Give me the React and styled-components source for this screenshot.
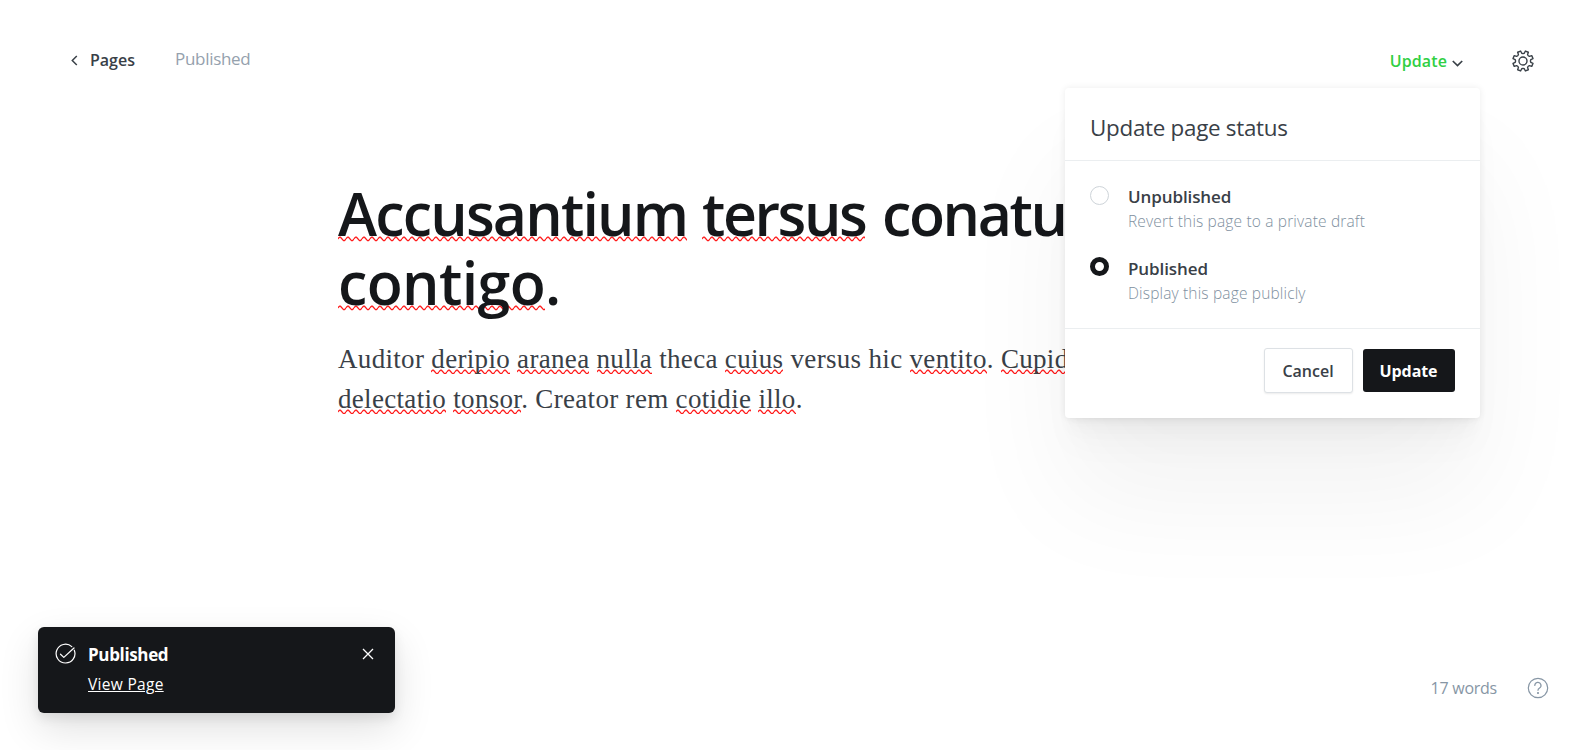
import React from "react";
import styled, { createGlobalStyle, css } from "styled-components";

const Global = createGlobalStyle`
  * { box-sizing: border-box; }
  body { margin: 0; background: #fff; font-family: "Open Sans", "Noto Sans", sans-serif; color: #15171a; overflow: hidden; }
  button { font-family: inherit; }
`;

const Screen = styled.div`
  position: relative;
  display: flex;
  flex-direction: column;
  width: 100%;
  height: 750px;
  overflow: hidden;
`;

const TopBar = styled.header`
  display: flex;
  align-items: center;
  height: 122px;
  padding: 0 49px 0 71px;
`;

const BackLink = styled.a`
  display: flex;
  align-items: center;
  gap: 12px;
  margin-top: -2px;
  color: #394047;
  svg { display: block; }
`;

const Label = styled.span`
  display: block;
  white-space: nowrap;
  line-height: 24px;
  font-size: ${(p) => p.$size || 16}px;
  font-weight: ${(p) => p.$weight || 400};
  letter-spacing: ${(p) => p.$track || 0}px;
  color: ${(p) => p.$color || "#394047"};
`;

const Status = styled.div`
  margin: -4px 0 0 40px;
`;

const Actions = styled.div`
  display: flex;
  align-items: center;
  margin-left: auto;
`;

const PublishTrigger = styled.button`
  display: flex;
  align-items: center;
  gap: 5px;
  padding: 0;
  margin-right: 49px;
  border: 0;
  background: none;
  svg { display: block; margin-top: 4px; }
`;

const IconButton = styled.button`
  display: block;
  padding: 0;
  border: 0;
  background: none;
  svg { display: block; }
`;

const Editor = styled.main`
  width: 910px;
  margin-left: 338px;
  padding-top: 57px;
`;

const Title = styled.h1`
  margin: 0;
  font-size: 59px;
  line-height: 69px;
  font-weight: 600;
  letter-spacing: -0.6px;
  color: #15171a;
  white-space: nowrap;
`;

const Body = styled.p`
  margin: 22px 0 0;
  font-family: "Liberation Serif", serif;
  font-size: 27px;
  line-height: 40px;
  letter-spacing: 0.32px;
  color: #394047;
  white-space: nowrap;
`;

const squiggle =
  "data:image/svg+xml,%3Csvg xmlns='http://www.w3.org/2000/svg' width='8' height='6'%3E%3Cpath d='M-3 4.600L-2 4.600L1.500 1.200L2.500 1.200L5.500 4.600L6.500 4.600L9.500 1.200' fill='none' stroke='%23ff1a1a' stroke-width='1.3' stroke-linejoin='round'/%3E%3C/svg%3E";

const Word = styled.span`
  letter-spacing: ${(p) => (p.$track === undefined ? "inherit" : `${p.$track}px`)};
  background: url("${squiggle}") repeat-x 0 ${(p) => (p.$large ? 63 : 25)}px;
`;

const Tracked = styled.span`
  margin-left: 2px;
  letter-spacing: ${(p) => p.$track}px;
`;

const Menu = styled.section`
  position: absolute;
  top: 88px;
  right: 103px;
  width: 415px;
  height: 330px;
  border-radius: 4px;
  background: #fff;
  box-shadow: 0 0 7px rgba(0, 0, 0, 0.08), 0 5.1px 5.3px -5px rgba(0, 0, 0, 0.016),
    0 9.5px 10px -5px rgba(0, 0, 0, 0.02), 0 17px 17.9px -5px rgba(0, 0, 0, 0.024),
    0 31.8px 33.4px -5px rgba(0, 0, 0, 0.029), 0 80px 115px 0 rgba(0, 0, 0, 0.05);
`;

const MenuHeader = styled.header`
  height: 73px;
  padding: 28px 25px 0;
  border-bottom: 1px solid #ebeef0;
`;

const Options = styled.div`
  height: 168px;
  padding: 24px 25px 0;
  border-bottom: 1px solid #ebeef0;
`;

const Option = styled.div`
  display: flex;
  gap: 19px;
  height: 71px;
`;

const OptionText = styled.div`
  padding-top: ${(p) => (p.$lower ? 1 : 0)}px;
`;

const Radio = styled.span`
  width: 19px;
  height: 19px;
  margin-top: 1px;
  border-radius: 50%;
  border: 1px solid #ced4d9;
  ${(p) => p.$checked && css`border: 5px solid #15171a;`}
`;

const MenuFooter = styled.footer`
  display: flex;
  justify-content: flex-end;
  align-items: center;
  gap: 10px;
  padding: 19px 25px 0;
`;

const Button = styled.button`
  display: flex;
  align-items: center;
  justify-content: center;
  width: ${(p) => (p.$primary ? 92 : 89)}px;
  height: ${(p) => (p.$primary ? 43 : 45)}px;
  padding: 0 1px 0 0;
  border-radius: 3px;
  border: ${(p) => (p.$primary ? "0" : "1px solid #dde1e5")};
  background: ${(p) => (p.$primary ? "#15171a" : "#fff")};
  box-shadow: ${(p) => (p.$primary ? "none" : "0 1px 2px rgba(0,0,0,.08)")};
`;

const Toast = styled.aside`
  position: absolute;
  left: 38px;
  top: 627px;
  display: flex;
  width: 357px;
  height: 86px;
  padding: 16px 21px 0 17px;
  border-radius: 6px;
  background: #15171a;
  box-shadow: 0 0 1px rgba(0, 0, 0, 0.05), 0 5px 12px rgba(0, 0, 0, 0.09), 0 16px 40px rgba(0, 0, 0, 0.12);
  svg { display: block; }
`;

const ToastText = styled.div`
  flex: 1;
  padding-left: 12px;
`;

const ToastLink = styled.a`
  display: block;
  margin-top: 5px;
  font-size: 15.5px;
  letter-spacing: 0.3px;
  line-height: 24px;
  color: #fff;
  text-decoration: underline;
`;

const CloseIcon = styled.svg`
  margin-top: 5px;
`;

const EditorFooter = styled.footer`
  display: flex;
  align-items: center;
  justify-content: flex-end;
  gap: 30px;
  margin-top: auto;
  height: 124px;
  padding-right: 34px;
  svg { display: block; }
`;

/* Eight rounded teeth, generated around the centre of a 24-unit box. */
const gearPath = (() => {
  const points = [];
  for (let i = 0; i < 8; i++) {
    [[-0.2, 11.2], [0.2, 11.2], [0.29, 8.6], [0.5, 8.1], [0.71, 8.6]].forEach(([offset, radius]) => {
      const a = (i + offset + 0.5) * (Math.PI / 4);
      points.push(`${(12 + radius * Math.sin(a)).toFixed(2)} ${(12 - radius * Math.cos(a)).toFixed(2)}`);
    });
  }
  return `M${points.join("L")}Z`;
})();

const GearIcon = () => (
  <svg width="22" height="22" viewBox="0 0 24 24" fill="none" stroke="#394047" strokeWidth="1.5" strokeLinejoin="round">
    <circle cx="12" cy="12" r="4.4" />
    <path d={gearPath} />
  </svg>
);

export default function App() {
  return (
    <Screen>
      <Global />
      <TopBar>
        <BackLink>
          <svg width="7" height="11" viewBox="0 0 7 11" fill="none" stroke="#394047" strokeWidth="1.5">
            <path d="M5.8 1L1.3 5.5l4.5 4.5" />
          </svg>
          <Label $weight={600} $track={0}>Pages</Label>
        </BackLink>
        <Status>
          <Label $size={17} $color="#95a1ad" $track={-0.3}>Published</Label>
        </Status>
        <Actions>
          <PublishTrigger>
            <Label $weight={600} $color="#30cf43" $track={0.1}>Update</Label>
            <svg width="11" height="7" viewBox="0 0 11 7" fill="none" stroke="#394047" strokeWidth="1.7">
              <path d="M.8 1l4.7 4.6L10.2 1" />
            </svg>
          </PublishTrigger>
          <IconButton aria-label="Settings"><GearIcon /></IconButton>
        </Actions>
      </TopBar>

      <Editor>
        <Title>
          <Word $large $track={-1.8}>Accusantium</Word> <Word $large $track={-2.4}>tersus</Word>{" "}
          <Tracked $track={-2.4}>conatus</Tracked><br />
          <Word $large>contigo</Word>.
        </Title>
        <Body>
          Auditor <Word>deripio</Word> <Word>aranea</Word> <Word>nulla</Word> theca <Word>cuius</Word> versus hic{" "}
          <Word>ventito</Word>. <Word>Cupid</Word><br />
          <Word>delectatio</Word> <Word>tonsor</Word>. Creator rem <Word>cotidie</Word> <Word>illo</Word>.
        </Body>
      </Editor>

      <EditorFooter>
        <Label $color="#8796a5" $track={-0.25}>17 words</Label>
        <svg width="22" height="22" viewBox="0 0 22 22" fill="none" stroke="#8796a5" strokeWidth="1.2" strokeLinecap="round">
          <circle cx="11" cy="11" r="9.7" />
          <path d="M7.8 8.4a3.1 3.1 0 1 1 4.5 2.8c-.9.5-1.3.9-1.3 2.1" />
          <circle cx="11" cy="16" r=".5" />
        </svg>
      </EditorFooter>

      <Menu>
        <MenuHeader>
          <Label $size={22.4} $track={-0.28}>Update page status</Label>
        </MenuHeader>
        <Options>
          <Option>
            <Radio />
            <OptionText>
              <Label $size={17} $weight={600} $track={-0.1}>Unpublished</Label>
              <Label $size={15.5} $weight={300} $track={0.16} $color="#8090a0">Revert this page to a private draft</Label>
            </OptionText>
          </Option>
          <Option>
            <Radio $checked />
            <OptionText $lower>
              <Label $size={17} $weight={600} $track={-0.1}>Published</Label>
              <Label $size={15.5} $weight={300} $track={0.16} $color="#8090a0">Display this page publicly</Label>
            </OptionText>
          </Option>
        </Options>
        <MenuFooter>
          <Button><Label $weight={600}>Cancel</Label></Button>
          <Button $primary><Label $weight={700} $color="#fff" $track={-0.1}>Update</Label></Button>
        </MenuFooter>
      </Menu>

      <Toast>
        <svg width="21" height="21" viewBox="0 0 21 21" fill="none" stroke="#fff" strokeWidth="1.2" strokeLinecap="round" strokeLinejoin="round">
          <path d="M19.3 7.2a9.4 9.4 0 1 1-2.5-3.6" />
          <path d="M5.5 11.2l3.3 3.2L19 5" />
        </svg>
        <ToastText>
          <Label $size={17} $weight={700} $color="#fff" $track={-0.35}>Published</Label>
          <ToastLink>View Page</ToastLink>
        </ToastText>
        <CloseIcon width="12" height="12" viewBox="0 0 12 12" fill="none" stroke="#fff" strokeWidth="1.3">
          <path d="M1 1l10 10M11 1L1 11" />
        </CloseIcon>
      </Toast>
    </Screen>
  );
}
